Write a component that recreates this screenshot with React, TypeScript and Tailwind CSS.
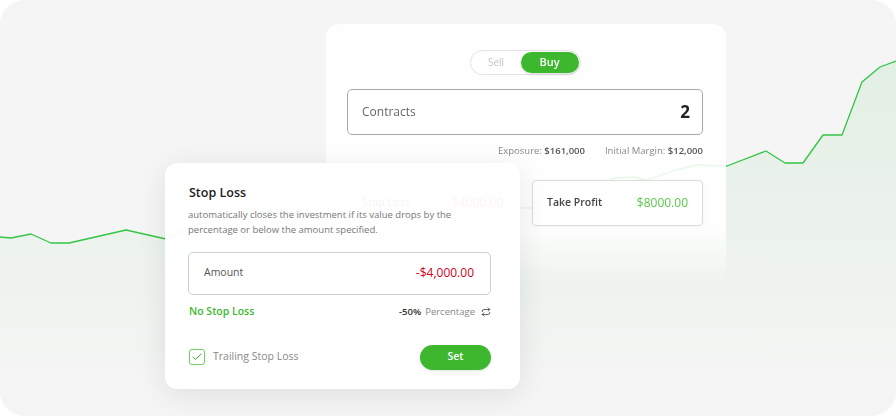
import { Check, Repeat } from "lucide-react";

const points: [number, number][] = [
  [0, 237], [11, 238], [31, 234], [51, 243], [69, 243], [126, 230], [166, 239],
  [195, 225], [260, 212], [340, 214], [420, 206], [533, 208], [615, 178],
  [634, 177], [646, 180], [676, 170], [696, 165], [727, 166], [766, 151],
  [785, 163], [803, 163], [823, 135], [842, 135], [862, 82], [880, 67], [896, 61],
];

const linePath = points.map(([x, y], i) => `${i ? "L" : "M"}${x} ${y}`).join(" ");
const areaPath = `${linePath} L896 416 L0 416 Z`;

function Chart() {
  return (
    <svg className="absolute inset-0" width="896" height="416" viewBox="0 0 896 416">
      <defs>
        <linearGradient id="fill" x1="0" y1="60" x2="0" y2="400" gradientUnits="userSpaceOnUse">
          <stop offset="0" stopColor="#3cc04c" stopOpacity="0.1" />
          <stop offset="1" stopColor="#3cc04c" stopOpacity="0" />
        </linearGradient>
      </defs>
      <path d={areaPath} fill="url(#fill)" />
      <path d={linePath} fill="none" stroke="#33c544" strokeWidth="1.3" strokeLinejoin="round" />
    </svg>
  );
}

function BackCard() {
  return (
    <div className="absolute left-[326px] top-[24px] flex h-[262px] w-[400px] flex-col items-center rounded-[12px] bg-white/[0.88] pl-[21px] pr-[23px] pt-[26px] shadow-[0_4px_24px_rgba(0,0,0,0.06)] [mask-image:linear-gradient(to_bottom,black_78%,transparent_100%)]">
      <div className="flex h-[25px] w-[111px] items-center rounded-full border border-[#e3e3e3] bg-white p-px">
        <span className="flex-1 text-center text-[10px] text-[#c4c4c4]">Sell</span>
        <span className="flex h-full w-[58px] items-center justify-center rounded-full bg-[#3db82e] text-[11px] font-semibold text-white shadow-[0_1px_3px_rgba(0,0,0,0.15)]">
          Buy
        </span>
      </div>
      <div className="mt-[14px] flex h-[46px] w-full items-center justify-between rounded-[5px] border border-[#a8a8a8] bg-white pl-[14px] pr-[12px]">
        <span className="text-[12px] text-[#666]">Contracts</span>
        <span className="text-[17px] font-bold text-[#222]">2</span>
      </div>
      <div className="mt-[9px] flex gap-[20px] self-end text-[9.5px] text-[#888]">
        <span>
          Exposure: <span className="font-semibold text-[#555]">$161,000</span>
        </span>
        <span>
          Initial Margin: <span className="font-semibold text-[#555]">$12,000</span>
        </span>
      </div>
      <div className="mt-[22px] flex w-full gap-[14px]">
        <div className="flex h-[46px] flex-1 items-center justify-between rounded-[4px] border border-[#dcdcdc] bg-white px-[14px]">
          <span className="text-[10.5px] font-semibold text-[#444]">Stop Loss</span>
          <span className="text-[12px] text-[#d0021b]">-$4000.00</span>
        </div>
        <div className="flex h-[46px] flex-1 items-center justify-between rounded-[4px] border border-[#dcdcdc] bg-white px-[14px] shadow-[0_1px_4px_rgba(0,0,0,0.04)]">
          <span className="text-[10.5px] font-semibold text-[#444]">Take Profit</span>
          <span className="text-[12px] text-[#5ac84a]">$8000.00</span>
        </div>
      </div>
    </div>
  );
}

function StopLossCard() {
  return (
    <div className="absolute left-[165px] top-[163px] flex h-[226px] w-[355px] flex-col rounded-[12px] bg-white/[0.95] pl-[23px] pr-[29px] pt-[21px] shadow-[0_6px_30px_rgba(0,0,0,0.09)]">
      <div className="pl-px text-[12.5px] font-semibold text-[#222]">Stop Loss</div>
      <p className="mt-[4px] text-[9.5px] leading-[15px] text-[#777]">
        automatically closes the investment if its value drops by the percentage or below the amount specified.
      </p>
      <div className="mt-[15px] flex h-[43px] items-center justify-between rounded-[5px] border border-[#cfcfcf] bg-white pl-[15px] pr-[16px]">
        <span className="text-[10.5px] text-[#555]">Amount</span>
        <span className="text-[12px] text-[#d0021b]">-$4,000.00</span>
      </div>
      <div className="mt-[9px] flex items-center justify-between pl-px">
        <span className="text-[10.5px] font-semibold text-[#3db82e]">No Stop Loss</span>
        <span className="flex items-center gap-[4px] text-[9.5px]">
          <span className="font-semibold text-[#333]">-50%</span>
          <span className="text-[#888]">Percentage</span>
          <Repeat size={10} strokeWidth={2} className="ml-[2px] text-[#444]" />
        </span>
      </div>
      <div className="mt-[25px] flex items-center justify-between pl-px">
        <label className="flex items-center gap-[8px]">
          <span className="flex h-[16px] w-[16px] items-center justify-center rounded-[3px] border border-[#6fd05f]">
            <Check size={12} strokeWidth={2} className="text-[#3db82e]" />
          </span>
          <span className="text-[10.5px] text-[#888]">Trailing Stop Loss</span>
        </label>
        <button className="flex h-[25px] w-[71px] items-center justify-center rounded-full bg-[#3db82e] text-[10.5px] font-semibold text-white shadow-[0_1px_3px_rgba(0,0,0,0.12)]">
          Set
        </button>
      </div>
    </div>
  );
}

export default function App() {
  return (
    <div className="h-[416px] w-[896px] bg-white font-['Open_Sans',sans-serif]">
      <div className="relative h-full w-full overflow-hidden rounded-[24px] bg-[#f5f5f5]">
        <Chart />
        <BackCard />
        <StopLossCard />
      </div>
    </div>
  );
}
